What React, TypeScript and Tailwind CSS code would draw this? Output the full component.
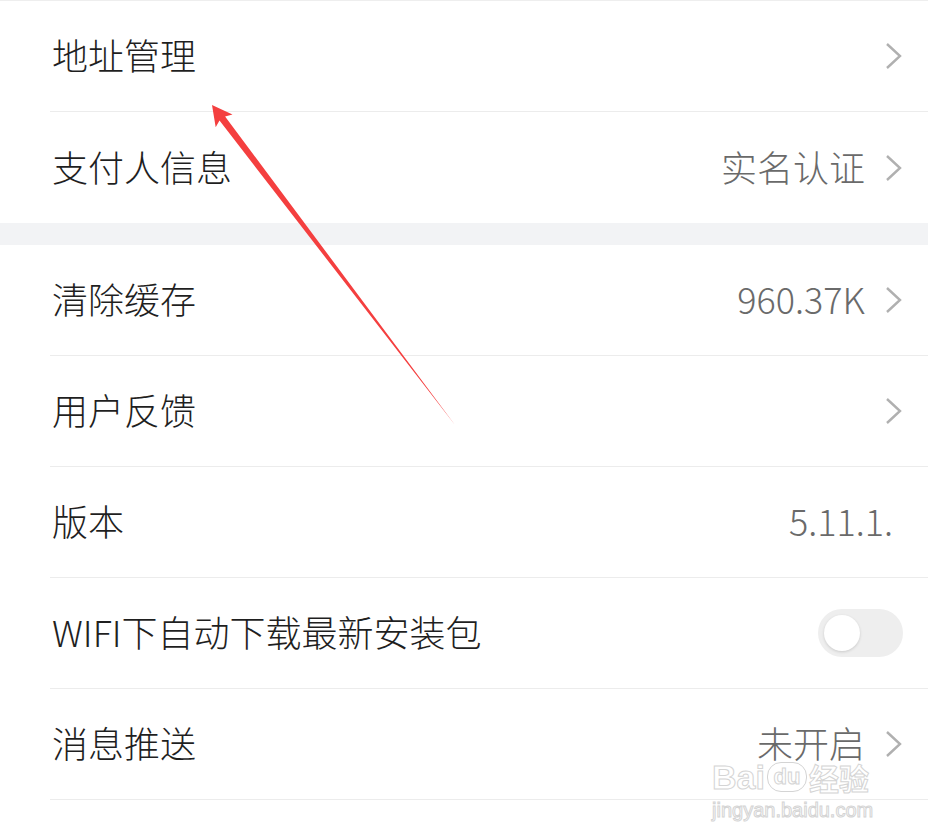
import type { ReactNode } from "react";

type Row = {
  label: string;
  value?: string;
  arrow?: boolean;
  toggle?: boolean;
  divider?: boolean;
};

const groupOne: Row[] = [
  { label: "地址管理", arrow: true, divider: true },
  { label: "支付人信息", value: "实名认证", arrow: true },
];

const groupTwo: Row[] = [
  { label: "清除缓存", value: "960.37K", arrow: true, divider: true },
  { label: "用户反馈", arrow: true, divider: true },
  { label: "版本", value: "5.11.1.", divider: true },
  { label: "WIFI下自动下载最新安装包", toggle: true, divider: true },
  { label: "消息推送", value: "未开启", arrow: true, divider: true },
  { label: "其他设置", arrow: true },
];

function Chevron() {
  return (
    <svg width="18" height="28" viewBox="0 0 18 28" fill="none" className="shrink-0">
      <path d="M2 2 L15 14 L2 26" stroke="#b0b0b0" strokeWidth="2.4" strokeLinejoin="miter" />
    </svg>
  );
}

function Toggle() {
  return (
    <div className="flex h-[48px] w-[85px] items-center rounded-full bg-[#eeeeee] pl-[6px]">
      <div className="h-[36px] w-[36px] rounded-full bg-white shadow-[0_1px_3px_rgba(0,0,0,0.15)]" />
    </div>
  );
}

function SettingRow({ row }: { row: Row }) {
  let right: ReactNode = null;
  if (row.toggle) {
    right = <Toggle />;
  } else {
    right = (
      <div className={`flex items-center gap-[20px] ${row.arrow ? "" : "pr-[10px]"}`}>
        {row.value ? (
          <span className="pb-[4px] text-[36px] leading-none text-[#6a6a6a]">{row.value}</span>
        ) : null}
        {row.arrow ? <Chevron /> : null}
      </div>
    );
  }

  return (
    <div className="pl-[50px]">
      <div
        className={`flex h-[111px] items-center justify-between pr-[25px] ${row.divider ? "border-b border-[#ececec]" : ""}`}
      >
        <span className="pb-[4px] pl-[2px] text-[36px] leading-none text-[#1f1f1f]">{row.label}</span>
        {right}
      </div>
    </div>
  );
}

function Arrow() {
  return (
    <svg
      className="pointer-events-none absolute left-0 top-0"
      width="928"
      height="838"
      viewBox="0 0 928 838"
    >
      <polygon
        points="212,105 232.5,114.6 225.1,116.4 455,425 219.5,120.6 215.7,127.3"
        fill="#f43f3f"
      />
    </svg>
  );
}

function Watermark() {
  return (
    <div className="pointer-events-none absolute left-[712px] top-[760px] flex flex-col items-start font-['Liberation_Sans',sans-serif] text-white [-webkit-text-stroke:1px_#d4d4d4]">
      <div className="flex items-center gap-[2px] text-[34px] font-bold leading-none">
        <span>Bai</span>
        <span className="flex h-[30px] w-[40px] items-center justify-center rounded-[14px] border border-[#d4d4d4] text-[22px]">
          du
        </span>
        <span className="font-['Noto_Sans_CJK_SC',sans-serif] text-[30px]">经验</span>
      </div>
      <span className="mt-[6px] text-[20px] leading-none">jingyan.baidu.com</span>
    </div>
  );
}

export default function App() {
  return (
    <div className="relative h-[838px] w-[928px] overflow-hidden bg-white font-['Noto_Sans_CJK_SC',sans-serif] font-light">
      <div className="border-t border-[#eeeeee]">
        {groupOne.map((row) => (
          <SettingRow key={row.label} row={row} />
        ))}
      </div>
      <div className="h-[22px] bg-[#f2f3f5]" />
      <div>
        {groupTwo.map((row) => (
          <SettingRow key={row.label} row={row} />
        ))}
      </div>
      <Arrow />
      <Watermark />
    </div>
  );
}
